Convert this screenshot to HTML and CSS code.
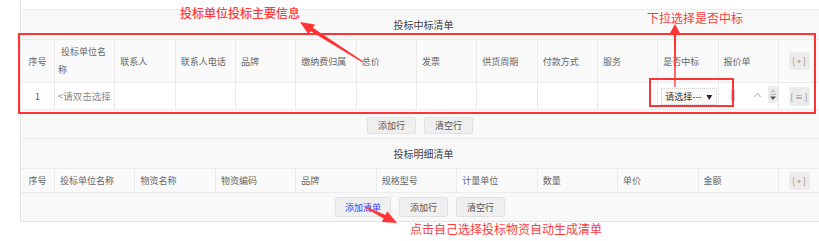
FILE: index.html
```html
<!DOCTYPE html>
<html lang="zh-CN">
  <head>
    <meta charset="UTF-8" />
    <meta name="viewport" content="width=device-width, initial-scale=1.0" />
    <title>投标中标清单</title>
    <link rel="stylesheet" href="styles.css">
  </head>
  <body>
    <section class="page">
      <div class="panel">
        <div class="strip"></div>
        <div class="caption">投标中标清单</div>
        <table class="grid grid-main">
          <colgroup>
            <col class="w-no" />
            <col span="12" />
            <col class="w-op" />
          </colgroup>
          <thead>
            <tr>
              <th class="c-no">序号</th>
              <th class="wrap">投标单位名称</th>
              <th>联系人</th>
              <th>联系人电话</th>
              <th>品牌</th>
              <th>缴纳费归属</th>
              <th>总价</th>
              <th>发票</th>
              <th>供货周期</th>
              <th>付款方式</th>
              <th>服务</th>
              <th>是否中标</th>
              <th>报价单</th>
              <th class="c-op"><span class="op">[ + ]</span></th>
            </tr>
          </thead>
          <tbody>
            <tr>
              <td class="c-no">1</td>
              <td class="wrap"><span class="pick">&lt;请双击选择</span></td>
              <td></td>
              <td></td>
              <td></td>
              <td></td>
              <td></td>
              <td></td>
              <td></td>
              <td></td>
              <td></td>
              <td class="c-sel">
                <div class="select"><span>请选择---</span><i>▼</i></div>
              </td>
              <td class="c-quote">
                <div class="quote">
                  <span class="stub"></span>
                  <svg class="chev" width="9" height="6" viewBox="0 0 9 6">
                    <polyline points="1,5 4.5,1.5 8,5" fill="none" stroke="#c2c2c2" stroke-width="1.2" />
                  </svg>
                  <svg class="spin" width="10" height="17" viewBox="0 0 10 17">
                    <rect width="10" height="17" fill="#ececec" />
                    <path d="M2 6.5 L5 3 L8 6.5 Z" fill="#c8c8c8" />
                    <line x1="2" y1="8.5" x2="8" y2="8.5" stroke="#b4b4b4" />
                    <path d="M2 10.5 L5 14 L8 10.5 Z" fill="#555" />
                  </svg>
                </div>
              </td>
              <td class="c-op"><span class="op op-row">[ ≡ ]</span></td>
            </tr>
          </tbody>
        </table>
        <div class="actions actions-main">
          <button>添加行</button>
          <button>清空行</button>
        </div>
        <div class="caption">投标明细清单</div>
        <table class="grid grid-detail">
          <colgroup>
            <col class="w-no" />
            <col span="9" />
            <col class="w-op" />
          </colgroup>
          <thead>
            <tr>
              <th class="c-no">序号</th>
              <th>投标单位名称</th>
              <th>物资名称</th>
              <th>物资编码</th>
              <th>品牌</th>
              <th>规格型号</th>
              <th>计量单位</th>
              <th>数量</th>
              <th>单价</th>
              <th>金额</th>
              <th class="c-op"><span class="op">[ + ]</span></th>
            </tr>
          </thead>
        </table>
        <div class="actions actions-detail">
          <button class="link">添加清单</button>
          <button>添加行</button>
          <button>清空行</button>
        </div>
      </div>

      <!-- 标注 -->
      <div class="mark mark-main"></div>
      <div class="mark mark-select"></div>
      <p class="note note-main">投标单位投标主要信息</p>
      <p class="note note-select">下拉选择是否中标</p>
      <p class="note note-auto">点击自己选择投标物资自动生成清单</p>
      <svg class="arrows" width="819" height="241" viewBox="0 0 819 241">
        <polygon fill="#f33" points="300,22 315,24.4 312.9,27.8 363.4,61.5 362.6,62.5 310.7,31.2 308.6,34.6" />
        <polygon fill="#f33" points="675,24 681,35 676.1,35 675.6,87 674.4,87 673.9,35 669,35" />
        <polygon fill="#f33" points="397,223 381.8,222.1 383.6,218.5 364.7,207.6 365.3,206.4 385.4,214.9 387.2,211.3" />
      </svg>
    </section>
  </body>
</html>
```

FILE: styles.css
```css
* {
  margin: 0;
  padding: 0;
  box-sizing: border-box;
}
body {
  background: #fff;
  font-family: "Noto Sans CJK SC", "Noto Sans", sans-serif;
  color: #666;
}
.page {
  position: relative;
  width: 819px;
  height: 241px;
  overflow: hidden;
}
.panel {
  margin-left: 20px;
  width: 799px;
  background: #f8f8f8;
  border-left: 1px solid #e4e4e4;
  border-bottom: 1px solid #e4e4e4;
}
.strip {
  height: 10px;
  background: #fff;
  border-bottom: 1px solid #ececec;
}
.caption {
  height: 29px;
  line-height: 29px;
  text-align: center;
  padding-left: 7px;
  font-size: 10px;
  color: #444;
}
.grid {
  width: 798px;
  table-layout: fixed;
  border-collapse: separate;
  border-spacing: 0;
  font-size: 9px;
}
.w-no {
  width: 34px;
}
.w-op {
  width: 40px;
}
.grid th,
.grid td {
  padding: 0 5px;
  text-align: left;
  font-weight: normal;
  vertical-align: middle;
  border-right: 1px solid #ebebeb;
  border-bottom: 1px solid #ebebeb;
  white-space: nowrap;
  overflow: hidden;
}
.grid th {
  background: #fafafa;
  color: #666;
  border-top: 1px solid #ebebeb;
}
.grid td {
  background: #fff;
  color: #555;
}
.grid .c-op {
  border-right: none;
  text-align: center;
  padding: 0;
}
.grid .c-no {
  text-align: center;
  padding: 0;
}
.grid-main thead tr {
  height: 44px;
}
.grid-main tbody tr {
  height: 27px;
}
.grid-main th.wrap {
  white-space: normal;
  line-height: 18px;
  padding-left: 3px;
  text-indent: 3px;
}
.grid-main td.wrap {
  padding-left: 3px;
  padding-right: 0;
}
.pick {
  white-space: nowrap;
  color: #888;
  font-size: 9.5px;
}
.grid-detail thead tr {
  height: 25px;
}
.op {
  display: inline-block;
  width: 21px;
  height: 18px;
  line-height: 18px;
  border-radius: 2px;
  background: #ececec;
  color: #888;
  font-size: 8px;
  text-align: center;
  white-space: nowrap;
}
.op-row {
  height: 19px;
  line-height: 19px;
}
.grid td.c-sel {
  padding: 0 0 0 3px;
}
.select {
  display: flex;
  align-items: center;
  justify-content: space-between;
  width: 56px;
  height: 17px;
  padding: 0 4px 0 3px;
  border: 1px dotted #cfcfcf;
  background: #fafafa;
  color: #333;
  font-size: 9px;
}
.select i {
  font-style: normal;
  font-size: 6px;
  color: #222;
}
.grid td.c-quote {
  padding: 0;
}
.quote {
  display: flex;
  align-items: center;
  padding-left: 12px;
}
.stub {
  width: 4px;
  height: 11px;
  margin-top: -2px;
  border: 1px solid #c4c4ee;
  background: #ebebff;
}
.chev {
  margin-left: 18px;
  margin-top: -2px;
}
.spin {
  margin-left: 6px;
  margin-top: -3px;
}
.actions {
  display: flex;
  justify-content: center;
  align-items: flex-start;
  gap: 8px;
}
.actions-main {
  height: 29px;
  padding-top: 7px;
  border-bottom: 1px solid #ececec;
}
.actions-detail {
  height: 28px;
  padding-top: 4px;
}
.actions button {
  height: 17px;
  padding: 0 10px;
  border: 1px solid #e2e2e2;
  border-radius: 2px;
  background: #efefef;
  color: #555;
  font-family: inherit;
  font-size: 9px;
}
.actions-detail button {
  height: 20px;
}
.actions .link {
  padding: 0 9px;
  color: #3b3bff;
}

/* 红色标注 */
.mark {
  position: absolute;
  border: 2px solid #f33;
}
.mark-main {
  left: 18px;
  top: 33px;
  width: 798px;
  height: 81px;
}
.mark-select {
  left: 649px;
  top: 78px;
  width: 85px;
  height: 29px;
}
.note {
  position: absolute;
  font-size: 12px;
  line-height: 14px;
  color: #ff3b3b;
  white-space: nowrap;
}
.note-main {
  left: 180px;
  top: 6px;
  font-weight: 500;
}
.note-select {
  left: 647px;
  top: 11px;
}
.note-auto {
  left: 410px;
  top: 222px;
}
.arrows {
  position: absolute;
  left: 0;
  top: 0;
  pointer-events: none;
}
```
